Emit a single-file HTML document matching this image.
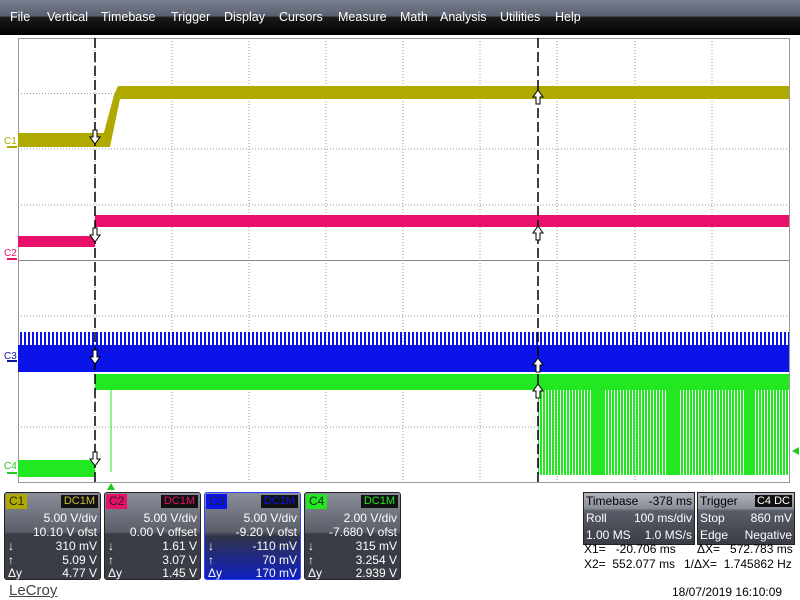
<!DOCTYPE html>
<html><head><meta charset="utf-8"><style>
*{margin:0;padding:0;box-sizing:border-box}
body{width:800px;height:600px;background:#fff;position:relative;overflow:hidden;font-family:"Liberation Sans",sans-serif}
.menu{position:absolute;left:0;top:0;width:800px;height:35px;background:linear-gradient(#7a8090 0%,#5a6070 45%,#1a1a1a 50%,#000 100%)}
.menu span{position:absolute;top:10px;color:#fff;font-size:12.5px}
.p{position:absolute;top:492px;width:97px;height:88px;background:linear-gradient(#8a8e98,#5a5e68 45%,#3a3d45 48%,#3a3d45);border:1px solid #222;border-radius:3px;color:#fff;font-size:12px}
.p .t{position:absolute;left:1px;top:1px;padding:0 3px;height:15px;line-height:15px;color:#222}
.p .d{position:absolute;right:2px;top:2px;background:#111;padding:0 3px;height:13px;line-height:13px;font-size:11px}
.p .r{position:absolute;right:3px;text-align:right;white-space:nowrap}
.p .l{position:absolute;left:3px}
.b{position:absolute;top:492px;height:53px;background:linear-gradient(#8a8e98,#4a4e58 40%,#3a3d45);border:1px solid #222;color:#fff;font-size:12px}
.b div{position:absolute;white-space:nowrap}
.tx{position:absolute;font-size:12px;color:#000;white-space:nowrap}
</style></head><body>
<div class="menu">
<span style="left:10px">File</span><span style="left:47px">Vertical</span><span style="left:101px">Timebase</span><span style="left:171px">Trigger</span><span style="left:224px">Display</span><span style="left:279px">Cursors</span><span style="left:338px">Measure</span><span style="left:400px">Math</span><span style="left:440px">Analysis</span><span style="left:500px">Utilities</span><span style="left:555px">Help</span>
</div>
<svg style="position:absolute;left:0;top:0" width="800" height="600">
<g stroke="#999" stroke-width="1" stroke-dasharray="1,2">
<line x1="95" y1="38" x2="95" y2="482"/><line x1="172" y1="38" x2="172" y2="482"/><line x1="249" y1="38" x2="249" y2="482"/><line x1="326" y1="38" x2="326" y2="482"/><line x1="403" y1="38" x2="403" y2="482"/><line x1="480" y1="38" x2="480" y2="482"/><line x1="557" y1="38" x2="557" y2="482"/><line x1="635" y1="38" x2="635" y2="482"/><line x1="712" y1="38" x2="712" y2="482"/>
<line x1="18" y1="93.5" x2="789" y2="93.5"/><line x1="18" y1="149" x2="789" y2="149"/><line x1="18" y1="205" x2="789" y2="205"/><line x1="18" y1="316" x2="789" y2="316"/><line x1="18" y1="371" x2="789" y2="371"/><line x1="18" y1="427" x2="789" y2="427"/>
</g>
<line x1="18" y1="260.5" x2="789" y2="260.5" stroke="#888"/>
<rect x="18.5" y="38.5" width="771" height="444" fill="none" stroke="#999"/>
<defs><pattern id="sp" width="4" height="14" patternUnits="userSpaceOnUse"><rect x="0" y="0" width="2" height="14" fill="#0a14e8"/></pattern>
<pattern id="gp" width="3" height="90" patternUnits="userSpaceOnUse"><rect x="0" y="0" width="2" height="90" fill="#22e822"/></pattern></defs>
<!-- C1 -->
<rect x="18" y="133" width="86" height="14" fill="#b0aa00"/>
<polygon points="100,147 114,95 118,86 789,86 789,99 120,99 110,147" fill="#b0aa00"/>
<!-- C2 -->
<rect x="18" y="236" width="77" height="11" fill="#e8106a"/>
<rect x="95" y="215" width="694" height="12" fill="#e8106a"/>
<!-- C3 -->
<rect x="18" y="345" width="771" height="27" fill="#0a14e8"/>
<rect x="18" y="332" width="771" height="15" fill="url(#sp)"/>
<!-- C4 -->
<rect x="18" y="460" width="77" height="17" fill="#22e822"/>
<rect x="95" y="374" width="694" height="16" fill="#22e822"/>
<rect x="538" y="390" width="251" height="85" fill="url(#gp)"/>
<rect x="593" y="390" width="10" height="85" fill="#22e822"/><rect x="668" y="390" width="10" height="85" fill="#22e822"/><rect x="745" y="390" width="10" height="85" fill="#22e822"/>
<line x1="111" y1="390" x2="111" y2="472" stroke="#22e822"/>
<!-- cursors -->
<line x1="95" y1="38" x2="95" y2="482" stroke="#000" stroke-width="1.5" stroke-dasharray="10,4"/>
<line x1="538" y1="38" x2="538" y2="482" stroke="#000" stroke-width="1.5" stroke-dasharray="10,4"/>
<g fill="#fff" stroke="#000" stroke-width="1">
<path d="M93,130h4v7h3l-5,7l-5,-7h3z"/><path d="M93,228h4v7h3l-5,7l-5,-7h3z"/><path d="M93,350h4v7h3l-5,7l-5,-7h3z"/><path d="M93,452h4v7h3l-5,7l-5,-7h3z"/>
<path d="M536,104h4v-7h3l-5,-7l-5,7h3z"/><path d="M536,240h4v-7h3l-5,-7l-5,7h3z"/><path d="M536,372h4v-7h3l-5,-7l-5,7h3z"/><path d="M536,398h4v-7h3l-5,-7l-5,7h3z"/>
</g>
<polygon points="107,490 111,483 115,490" fill="#22c822"/>
<polygon points="792,451 799,447 799,455" fill="#22c822"/>
<g font-size="10" font-family="Liberation Sans">
<text x="4" y="144" fill="#b0aa00">C1</text><text x="4" y="256" fill="#e8106a">C2</text><text x="4" y="359" fill="#0a14a0">C3</text><text x="4" y="469" fill="#22c822">C4</text>
</g>
<line x1="7" y1="147" x2="17" y2="147" stroke="#b0aa00" stroke-width="2"/><line x1="7" y1="259" x2="17" y2="259" stroke="#e8106a" stroke-width="2"/><line x1="7" y1="361" x2="17" y2="361" stroke="#0a14a0" stroke-width="2"/><line x1="7" y1="473" x2="17" y2="473" stroke="#22c822" stroke-width="2"/>
</svg>
<div class="p" style="left:4px"><div class="t" style="background:#b0aa00">C1</div><div class="d" style="color:#c8c040">DC1M</div><div class="r" style="top:18px">5.00 V/div</div><div class="r" style="top:32px">10.10 V ofst</div><div class="l" style="top:46px">↓</div><div class="r" style="top:46px">310 mV</div><div class="l" style="top:60px">↑</div><div class="r" style="top:60px">5.09 V</div><div class="l" style="top:73px">Δy</div><div class="r" style="top:73px">4.77 V</div></div>
<div class="p" style="left:104px"><div class="t" style="background:#e8106a">C2</div><div class="d" style="color:#e8106a">DC1M</div><div class="r" style="top:18px">5.00 V/div</div><div class="r" style="top:32px">0.00 V offset</div><div class="l" style="top:46px">↓</div><div class="r" style="top:46px">1.61 V</div><div class="l" style="top:60px">↑</div><div class="r" style="top:60px">3.07 V</div><div class="l" style="top:73px">Δy</div><div class="r" style="top:73px">1.45 V</div></div>
<div class="p" style="left:204px;background:linear-gradient(#8a8e98,#5a5e68 45%,#303448 50%,#1020c0);border-color:#3040ff"><div class="t" style="background:#0a14e8">C3</div><div class="d" style="color:#0a14e8">DC1M</div><div class="r" style="top:18px">5.00 V/div</div><div class="r" style="top:32px">-9.20 V ofst</div><div class="l" style="top:46px">↓</div><div class="r" style="top:46px">-110 mV</div><div class="l" style="top:60px">↑</div><div class="r" style="top:60px">70 mV</div><div class="l" style="top:73px">Δy</div><div class="r" style="top:73px">170 mV</div></div>
<div class="p" style="left:304px"><div class="t" style="background:#22e822">C4</div><div class="d" style="color:#22e822">DC1M</div><div class="r" style="top:18px">2.00 V/div</div><div class="r" style="top:32px">-7.680 V ofst</div><div class="l" style="top:46px">↓</div><div class="r" style="top:46px">315 mV</div><div class="l" style="top:60px">↑</div><div class="r" style="top:60px">3.254 V</div><div class="l" style="top:73px">Δy</div><div class="r" style="top:73px">2.939 V</div></div>
<div class="b" style="left:583px;width:112px;background:linear-gradient(#b0b4bc,#8a8e98 30%,#5a5e68 35%,#3a3d45)"><div style="left:2px;top:1px;color:#000">Timebase</div><div style="right:2px;top:1px;color:#000">-378 ms</div><div style="left:2px;top:18px">Roll</div><div style="right:2px;top:18px">100 ms/div</div><div style="left:2px;top:35px">1.00 MS</div><div style="right:2px;top:35px">1.0 MS/s</div></div>
<div class="b" style="left:697px;width:98px;background:linear-gradient(#b0b4bc,#8a8e98 30%,#5a5e68 35%,#3a3d45)"><div style="left:2px;top:1px;color:#000">Trigger</div><div style="right:2px;top:2px;background:#111;color:#fff;font-size:11px;padding:0 2px">C4 DC</div><div style="left:2px;top:18px">Stop</div><div style="right:2px;top:18px">860 mV</div><div style="left:2px;top:35px">Edge</div><div style="right:2px;top:35px">Negative</div></div>
<div class="tx" style="left:584px;top:542px">X1=&nbsp;&nbsp;&nbsp;-20.706 ms</div><div class="tx" style="left:697px;top:542px">ΔX=&nbsp;&nbsp;&nbsp;572.783 ms</div>
<div class="tx" style="left:584px;top:557px">X2=&nbsp;&nbsp;552.077 ms</div><div class="tx" style="left:684px;top:557px">1/ΔX=&nbsp;&nbsp;1.745862 Hz</div>
<div class="tx" style="left:672px;top:585px">18/07/2019 16:10:09</div>
<div class="tx" style="left:9px;top:582px;font-size:15px;color:#444;text-decoration:underline">LeCroy</div>
</body></html>
